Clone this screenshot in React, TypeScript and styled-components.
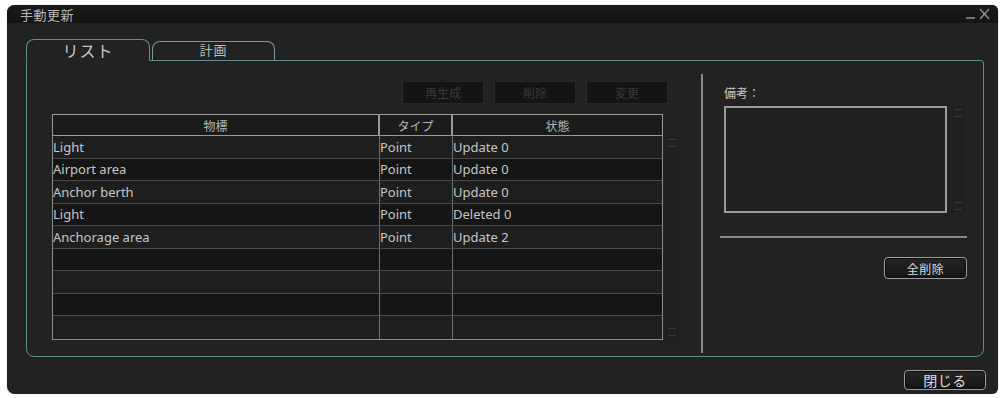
import React from "react";
import styled, { createGlobalStyle } from "styled-components";

const Global = createGlobalStyle`
  html, body { margin: 0; padding: 0; background: #ffffff; }
  body { font-family: "Noto Sans", "Noto Sans CJK JP", sans-serif; }
`;

const TEAL = "#5e8d8e";
const JP = `"Noto Sans CJK JP", "Noto Sans", sans-serif`;

const Window = styled.div`
  margin: 5px 0 0 7px;
  width: 991px;
  height: 389px;
  background: #222222;
  border-radius: 8px 6px 6px 8px;
  display: flex;
  flex-direction: column;
  overflow: hidden;
  box-shadow: 0 0 1px rgba(0, 0, 0, 0.6);
`;

const TitleBar = styled.div`
  height: 18px;
  flex: none;
  background: linear-gradient(#1a1a1a, #141414);
  display: flex;
  align-items: center;
  justify-content: space-between;
  padding: 0 8px 0 13px;
`;

const Title = styled.span`
  font-family: ${JP};
  font-size: 13px;
  color: #b8b8b8;
  letter-spacing: 0.5px;
`;

const WinControls = styled.div`
  display: flex;
  align-items: center;
  gap: 4px;
  color: #9a9a9a;
`;

const Body = styled.div`
  display: flex;
  flex-direction: column;
  padding: 15px 0 0 19px;
`;

const TabStrip = styled.div`
  display: flex;
  align-items: flex-end;
  gap: 2px;
  height: 22px;
`;

const Tab = styled.div<{ $active?: boolean }>`
  position: relative;
  z-index: 1;
  box-sizing: border-box;
  width: ${(p) => (p.$active ? 124 : 123)}px;
  height: ${(p) => (p.$active ? 22 : 20)}px;
  margin-bottom: -1px;
  padding-bottom: ${(p) => (p.$active ? 1 : 4)}px;
  border: 1px solid ${(p) => (p.$active ? TEAL : "#7f9594")};
  border-bottom: 1px solid ${(p) => (p.$active ? "#222222" : TEAL)};
  border-radius: 8px 8px 0 0;
  background: #222222;
  display: flex;
  align-items: center;
  justify-content: center;
  font-family: ${JP};
  font-size: ${(p) => (p.$active ? 16 : 13)}px;
  color: ${(p) => (p.$active ? "#c8c8c8" : "#bdbdbd")};
  letter-spacing: 1px;
`;

const Panel = styled.div`
  box-sizing: border-box;
  width: 958px;
  height: 297px;
  border: 1px solid ${TEAL};
  border-radius: 0 3px 8px 8px;
  display: flex;
`;

const LeftSection = styled.div`
  width: 675px;
  padding: 20px 0 0 25px;
  box-sizing: border-box;
  display: flex;
  flex-direction: column;
`;

const ButtonRow = styled.div`
  width: 616px;
  display: flex;
  justify-content: flex-end;
  gap: 10px;
`;

const DimButton = styled.div`
  box-sizing: border-box;
  width: 82px;
  height: 23px;
  background: #141414;
  border: 1px solid #262626;
  display: flex;
  align-items: center;
  justify-content: center;
  font-family: ${JP};
  font-size: 12px;
  color: #3a3a3a;
`;

const TableArea = styled.div`
  margin-top: 10px;
  display: flex;
  gap: 2px;
`;

const Table = styled.div`
  width: 611px;
  display: flex;
  flex-direction: column;
`;

const COLS = "327px 73px 1fr";

const HeaderRow = styled.div`
  display: grid;
  grid-template-columns: ${COLS};
  height: 22px;
`;

const HeaderCell = styled.div`
  box-sizing: border-box;
  border: 1px solid #9a9a9a;
  background: #1b1b1b;
  display: flex;
  align-items: center;
  justify-content: center;
  font-family: ${JP};
  font-size: 12px;
  color: #b5b5b5;
`;

const TableBody = styled.div`
  border: 1px solid #8a8a8a;
  border-top: none;
`;

const Row = styled.div<{ $dark: boolean }>`
  box-sizing: border-box;
  display: grid;
  grid-template-columns: ${COLS};
  height: 22.5px;
  border-bottom: 1px solid #4a4a4a;
  background: ${(p) => (p.$dark ? "#151515" : "#1e1e1e")};
  &:last-child { border-bottom: none; }
`;

const Cell = styled.div`
  box-sizing: border-box;
  border-right: 1px solid #6e6e6e;
  display: flex;
  align-items: center;
  font-family: "Noto Sans", sans-serif;
  font-size: 13px;
  color: #c6c6c6;
  white-space: nowrap;
  overflow: hidden;
  &:last-child { border-right: none; }
`;

const ScrollTrack = styled.div<{ $h: number }>`
  width: 14px;
  height: ${(p) => p.$h}px;
  margin-top: ${(p) => (p.$h > 150 ? 22 : 0)}px;
  background: #202020;
  display: flex;
  flex-direction: column;
  justify-content: space-between;
  align-items: center;
  padding: 3px 0;
  box-sizing: border-box;
`;

const ScrollMark = styled.div`
  width: 8px;
  height: 6px;
  border-top: 1px solid #3a3a3a;
  border-bottom: 1px solid #3a3a3a;
`;

const Divider = styled.div`
  width: 2px;
  background: #8a8a8a;
  margin: 13px 0 3px 0;
  flex: none;
`;

const RightSection = styled.div`
  flex: 1;
  padding: 24px 16px 0 21px;
  display: flex;
  flex-direction: column;
`;

const Label = styled.div`
  font-family: ${JP};
  font-size: 12px;
  line-height: 16px;
  height: 16px;
  color: #c8c8c8;
  margin-bottom: 5px;
`;

const NoteRow = styled.div`
  display: flex;
  gap: 4px;
`;

const NoteBox = styled.div`
  box-sizing: border-box;
  width: 223px;
  height: 107px;
  border: 2px solid #9a9a9a;
  background: #202020;
`;

const HLine = styled.div`
  margin: 23px 0 0 -4px;
  width: 247px;
  height: 2px;
  background: #8a8a8a;
`;

const ActionButton = styled.div<{ $w: number; $h: number; $fs: number }>`
  box-sizing: border-box;
  width: ${(p) => p.$w}px;
  height: ${(p) => p.$h}px;
  border: 1px solid #a0a0a0;
  border-radius: 4px;
  background: linear-gradient(#262626, #141414);
  box-shadow: inset 0 0 0 1px #0c0c0c;
  display: flex;
  align-items: center;
  justify-content: center;
  font-family: ${JP};
  font-size: ${(p) => p.$fs}px;
  color: #dcdcdc;
  letter-spacing: 0.5px;
`;

const RightButtonWrap = styled.div`
  margin-top: 19px;
  display: flex;
  justify-content: flex-end;
`;

const Footer = styled.div`
  margin-top: 13px;
  width: 960px;
  display: flex;
  justify-content: flex-end;
`;

const rows: [string, string, string][] = [
  ["Light", "Point", "Update 0"],
  ["Airport area", "Point", "Update 0"],
  ["Anchor berth", "Point", "Update 0"],
  ["Light", "Point", "Deleted 0"],
  ["Anchorage area", "Point", "Update 2"],
  ["", "", ""],
  ["", "", ""],
  ["", "", ""],
  ["", "", ""],
];

export default function App() {
  return (
    <>
      <Global />
      <Window>
        <TitleBar>
          <Title>手動更新</Title>
          <WinControls>
            <svg width="24" height="12" viewBox="0 0 24 12">
              <line x1="0" y1="10" x2="9" y2="10" stroke="#8f8f8f" strokeWidth="1.4" />
              <line x1="14" y1="1" x2="23" y2="11" stroke="#8f8f8f" strokeWidth="1.4" />
              <line x1="23" y1="1" x2="14" y2="11" stroke="#8f8f8f" strokeWidth="1.4" />
            </svg>
          </WinControls>
        </TitleBar>
        <Body>
          <TabStrip>
            <Tab $active>リスト</Tab>
            <Tab>計画</Tab>
          </TabStrip>
          <Panel>
            <LeftSection>
              <ButtonRow>
                <DimButton>再生成</DimButton>
                <DimButton>削除</DimButton>
                <DimButton>変更</DimButton>
              </ButtonRow>
              <TableArea>
                <Table>
                  <HeaderRow>
                    <HeaderCell>物標</HeaderCell>
                    <HeaderCell>タイプ</HeaderCell>
                    <HeaderCell>状態</HeaderCell>
                  </HeaderRow>
                  <TableBody>
                    {rows.map((r, i) => (
                      <Row key={i} $dark={i % 2 === 1}>
                        <Cell>{r[0]}</Cell>
                        <Cell>{r[1]}</Cell>
                        <Cell>{r[2]}</Cell>
                      </Row>
                    ))}
                  </TableBody>
                </Table>
                <ScrollTrack $h={203}>
                  <ScrollMark />
                  <ScrollMark />
                </ScrollTrack>
              </TableArea>
            </LeftSection>
            <Divider />
            <RightSection>
              <Label>備考：</Label>
              <NoteRow>
                <NoteBox />
                <ScrollTrack $h={107}>
                  <ScrollMark />
                  <ScrollMark />
                </ScrollTrack>
              </NoteRow>
              <HLine />
              <RightButtonWrap>
                <ActionButton $w={83} $h={22} $fs={12}>全削除</ActionButton>
              </RightButtonWrap>
            </RightSection>
          </Panel>
          <Footer>
            <ActionButton $w={82} $h={20} $fs={14}>閉じる</ActionButton>
          </Footer>
        </Body>
      </Window>
    </>
  );
}
